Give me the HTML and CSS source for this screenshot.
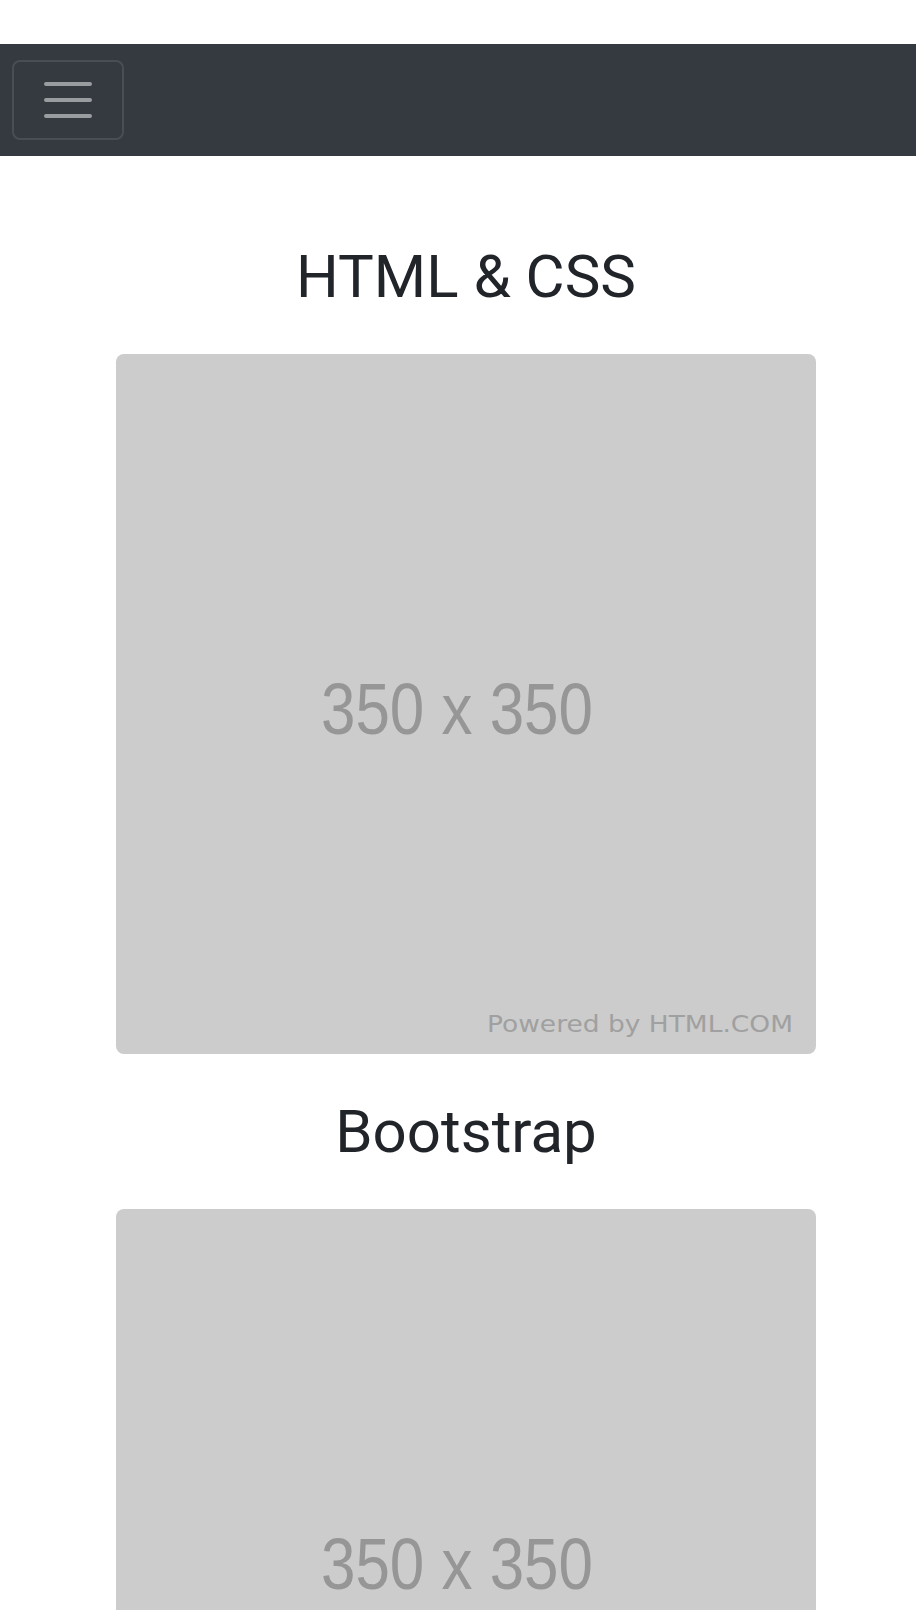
FILE: index.html
```html
<!DOCTYPE html>
<html lang="en">
<head>
<meta charset="utf-8">
<title>HTML &amp; CSS</title>
<link rel="stylesheet" href="styles.css">
</head>
<body>
<nav class="navbar">
  <button class="toggler" type="button" aria-label="Toggle navigation">
    <svg class="toggler-icon" viewBox="0 0 30 30" width="60" height="60">
      <path d="M4 7h22M4 15h22M4 23h22" stroke="rgba(255,255,255,0.5)" stroke-width="2" stroke-linecap="round" fill="none"/>
    </svg>
  </button>
</nav>
<main class="content">
  <section class="item">
    <h3 class="item-title">HTML &amp; CSS</h3>
    <svg class="placeholder" viewBox="0 0 700 700" width="700" height="700" role="img" aria-label="350 x 350">
      <rect width="700" height="700" fill="#cccccc"/>
      <text class="ph-size" x="205" y="380" textLength="272" lengthAdjust="spacingAndGlyphs">350 x 350</text>
      <text class="ph-brand" x="371" y="678" textLength="306" lengthAdjust="spacingAndGlyphs">Powered by HTML.COM</text>
    </svg>
  </section>
  <section class="item">
    <h3 class="item-title">Bootstrap</h3>
    <svg class="placeholder" viewBox="0 0 700 700" width="700" height="700" role="img" aria-label="350 x 350">
      <rect width="700" height="700" fill="#cccccc"/>
      <text class="ph-size" x="205" y="380" textLength="272" lengthAdjust="spacingAndGlyphs">350 x 350</text>
      <text class="ph-brand" x="371" y="678" textLength="306" lengthAdjust="spacingAndGlyphs">Powered by HTML.COM</text>
    </svg>
  </section>
</main>
</body>
</html>
```

FILE: styles.css
```css
html, body {
  margin: 0;
  padding: 0;
  background: #ffffff;
}

body {
  font-family: Roboto, "Liberation Sans", Arial, sans-serif;
  color: #212529;
}

.navbar {
  margin-top: 44px;
  background: #343a40;
  padding: 16px 12px;
  display: flex;
  align-items: center;
}

.toggler {
  display: flex;
  align-items: center;
  justify-content: center;
  padding: 8px 24px;
  background: transparent;
  border: 2px solid rgba(255, 255, 255, 0.1);
  border-radius: 8px;
  margin: 0;
  cursor: pointer;
}

.toggler-icon {
  display: block;
}

.content {
  width: 700px;
  margin-left: 116px;
  padding-top: 43px;
}

.item {
  display: flex;
  flex-direction: column;
}

.item-title {
  margin: 42px 0 41px;
  font-size: 60px;
  line-height: 72px;
  font-weight: 400;
  text-align: center;
  color: #212529;
}

.placeholder {
  display: block;
  border-radius: 8px;
  overflow: hidden;
}

.ph-size {
  font-family: "Liberation Sans", Arial, sans-serif;
  font-size: 73px;
  fill: #969696;
}

.ph-brand {
  font-family: "DejaVu Sans", Verdana, sans-serif;
  font-size: 23px;
  fill: #a0a0a0;
}
```
